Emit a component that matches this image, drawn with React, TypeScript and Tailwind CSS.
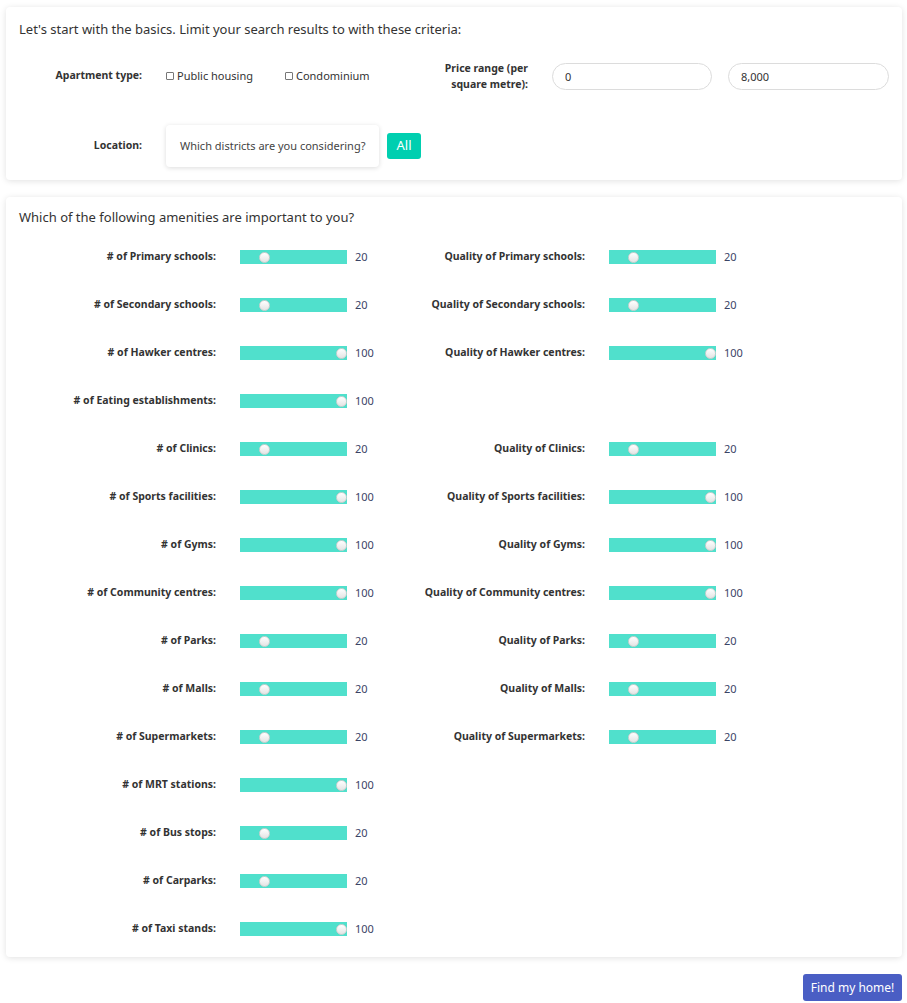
import React from "react";

type Amenity = { label: string; value: number };
type Row = { left: Amenity; right?: Amenity };

const rows: Row[] = [
  { left: { label: "# of Primary schools:", value: 20 }, right: { label: "Quality of Primary schools:", value: 20 } },
  { left: { label: "# of Secondary schools:", value: 20 }, right: { label: "Quality of Secondary schools:", value: 20 } },
  { left: { label: "# of Hawker centres:", value: 100 }, right: { label: "Quality of Hawker centres:", value: 100 } },
  { left: { label: "# of Eating establishments:", value: 100 } },
  { left: { label: "# of Clinics:", value: 20 }, right: { label: "Quality of Clinics:", value: 20 } },
  { left: { label: "# of Sports facilities:", value: 100 }, right: { label: "Quality of Sports facilities:", value: 100 } },
  { left: { label: "# of Gyms:", value: 100 }, right: { label: "Quality of Gyms:", value: 100 } },
  { left: { label: "# of Community centres:", value: 100 }, right: { label: "Quality of Community centres:", value: 100 } },
  { left: { label: "# of Parks:", value: 20 }, right: { label: "Quality of Parks:", value: 20 } },
  { left: { label: "# of Malls:", value: 20 }, right: { label: "Quality of Malls:", value: 20 } },
  { left: { label: "# of Supermarkets:", value: 20 }, right: { label: "Quality of Supermarkets:", value: 20 } },
  { left: { label: "# of MRT stations:", value: 100 } },
  { left: { label: "# of Bus stops:", value: 20 } },
  { left: { label: "# of Carparks:", value: 20 } },
  { left: { label: "# of Taxi stands:", value: 100 } },
];

function Slider({ value }: { value: number }) {
  return (
    <div className="relative h-[14px] w-[107px] bg-[#50e0cc]">
      <div
        className="absolute top-[1.5px] h-[11px] w-[11px] rounded-full border border-[#cfcfcf] bg-gradient-to-b from-white to-[#e4e4e4]"
        style={{ left: `${(value / 100) * 96}px` }}
      />
    </div>
  );
}

function AmenityCell({ item }: { item?: Amenity }) {
  if (!item) return <div className="w-[369px]" />;
  return (
    <div className="flex w-[369px] items-center">
      <div className="w-[197px] text-right text-[10.5px] font-bold text-[#333]">{item.label}</div>
      <div className="ml-[24px]">
        <Slider value={item.value} />
      </div>
      <div className="ml-[8px] text-[11px] text-[#3b4466]">{item.value}</div>
    </div>
  );
}

function Checkbox({ label }: { label: string }) {
  return (
    <label className="flex items-center gap-[3px] text-[11px] text-[#333]">
      <span className="h-[8px] w-[8px] rounded-[1px] border border-[#777] bg-white" />
      {label}
    </label>
  );
}

export default function App() {
  return (
    <div className="min-h-screen bg-white pl-[6px] pr-[5px] pt-[7px] font-['Noto_Sans',sans-serif] text-[#333]">
      <div className="rounded-[4px] bg-white px-[13px] pb-[13px] pt-[12px] shadow-[0_1px_6px_rgba(0,0,0,0.12)]">
        <h2 className="text-[13px] leading-[20px]">Let's start with the basics. Limit your search results to with these criteria:</h2>

        <div className="mt-[21px] flex items-center">
          <div className="w-[123px] text-right text-[10.5px] font-bold">Apartment type:</div>
          <div className="ml-[24px] flex items-center gap-[32px]">
            <Checkbox label="Public housing" />
            <Checkbox label="Condominium" />
          </div>
          <div className="ml-auto flex items-center">
            <div className="w-[88px] text-right text-[10.5px] font-bold leading-[16px]">
              Price range (per
              <br />
              square metre):
            </div>
            <input
              readOnly
              value="0"
              className="ml-[24px] h-[27px] w-[160px] rounded-full border border-[#dcdcdc] px-[12px] text-[11px] text-[#333] outline-none"
            />
            <input
              readOnly
              value="8,000"
              className="ml-[16px] h-[27px] w-[161px] rounded-full border border-[#dcdcdc] px-[12px] text-[11px] text-[#333] outline-none"
            />
          </div>
        </div>

        <div className="mt-[33px] flex items-center">
          <div className="w-[123px] text-right text-[10.5px] font-bold">Location:</div>
          <div className="ml-[24px] flex h-[42px] w-[213px] items-center whitespace-nowrap rounded-[4px] bg-white px-[14px] text-[11px] text-[#444] shadow-[0_1px_5px_rgba(0,0,0,0.14)]">
            Which districts are you considering?
          </div>
          <button className="ml-[8px] h-[26px] w-[34px] rounded-[3px] bg-[#00cfb0] text-[13px] text-white">All</button>
        </div>
      </div>

      <div className="mt-[17px] rounded-[4px] bg-white px-[13px] pb-[21px] pt-[10px] shadow-[0_1px_6px_rgba(0,0,0,0.12)]">
        <h2 className="text-[13px] leading-[20px]">Which of the following amenities are important to you?</h2>
        <div className="mt-[23px] flex flex-col gap-[34px]">
          {rows.map((r) => (
            <div key={r.left.label} className="flex h-[14px] items-center">
              <AmenityCell item={r.left} />
              <AmenityCell item={r.right} />
            </div>
          ))}
        </div>
      </div>

      <div className="mt-[17px] flex justify-end">
        <button className="h-[27px] w-[99px] rounded-[3px] bg-[#4a5ec4] text-[12px] text-white">Find my home!</button>
      </div>
    </div>
  );
}
